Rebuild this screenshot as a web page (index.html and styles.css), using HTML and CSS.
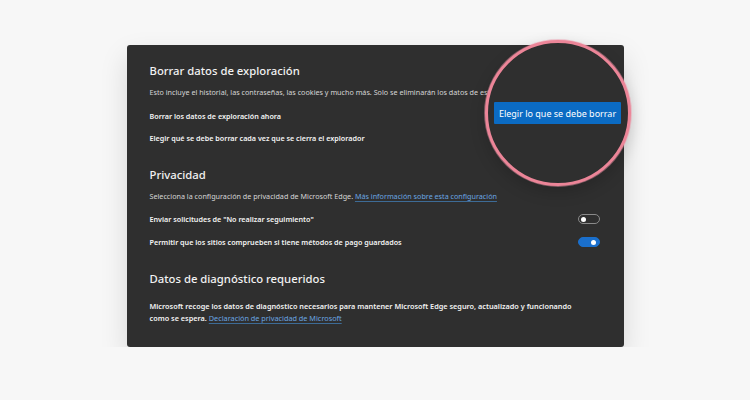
FILE: index.html
```html
<!DOCTYPE html>
<html>
  <head>
    <link rel="stylesheet" href="styles.css">
  </head>
  <body>
    <div class="card">
      <div class="section">
        <h2 class="title">Borrar datos de exploración</h2>
        <p class="desc">Esto incluye el historial, las contraseñas, las cookies y mucho más. Solo se eliminarán los datos de este perfil.</p>
        <div class="row">Borrar los datos de exploración ahora</div>
        <div class="row">Elegir qué se debe borrar cada vez que se cierra el explorador</div>
      </div>
      <div class="section">
        <h2 class="title">Privacidad</h2>
        <p class="desc">Selecciona la configuración de privacidad de Microsoft Edge. <a href="#">Más información sobre esta configuración</a></p>
        <div class="row">
          Enviar solicitudes de "No realizar seguimiento"
          <span class="toggle"></span>
        </div>
        <div class="row">
          Permitir que los sitios comprueben si tiene métodos de pago guardados
          <span class="toggle on"></span>
        </div>
      </div>
      <div class="section">
        <h2 class="title">Datos de diagnóstico requeridos</h2>
        <p class="para">Microsoft recoge los datos de diagnóstico necesarios para mantener Microsoft Edge seguro, actualizado y funcionando como se espera. <a href="#">Declaración de privacidad de Microsoft</a></p>
      </div>
      <div class="lens">
        <button class="choose">Elegir lo que se debe borrar</button>
      </div>
    </div>
  </body>
</html>
```

FILE: styles.css
```css
body {
  margin: 0;
  background: #f7f7f7;
  font-family: "Noto Sans", "Open Sans", sans-serif;
  -webkit-font-smoothing: antialiased;
}
.card {
  position: relative;
  width: 497px;
  box-sizing: border-box;
  margin: 45px auto 0;
  padding: 18px 24px 23px 23px;
  background: #2f2f2f;
  border-radius: 3px;
  color: #fff;
  box-shadow: 0 12px 28px rgba(0, 0, 0, 0.13);
}
.section + .section {
  margin-top: 18px;
}
.title {
  margin: 0;
  font-size: 11.3px;
  font-weight: 500;
  line-height: 16px;
  color: #f2f2f2;
}
.desc {
  margin: 7px 0 0;
  font-size: 7.2px;
  line-height: 12px;
  color: #d6d6d6;
  white-space: nowrap;
}
.row {
  display: flex;
  align-items: center;
  justify-content: space-between;
  height: 22px;
  font-size: 7.2px;
  font-weight: 600;
  color: #f4f4f4;
}
.desc + .row {
  margin-top: 7px;
}
.section + .section .desc + .row {
  margin-top: 6px;
}
.section + .section .row + .row {
  margin-top: 1px;
}
.para {
  margin: 13px 0 0;
  width: 432px;
  font-size: 7.3px;
  font-weight: 600;
  line-height: 12px;
  color: #f2f2f2;
}
a {
  color: #6aa6e2;
  font-weight: 400;
  text-decoration: underline;
  text-decoration-color: #3d6b96;
  text-underline-offset: 1.5px;
}
.toggle {
  position: relative;
  width: 22px;
  height: 10px;
  box-sizing: border-box;
  border: 1px solid #8a8a8a;
  border-radius: 5px;
}
.toggle::after {
  content: "";
  position: absolute;
  top: 1.5px;
  left: 2.5px;
  width: 5px;
  height: 5px;
  border-radius: 50%;
  background: #fff;
}
.toggle.on {
  border-color: #1a6fcc;
  background: #1a6fcc;
}
.toggle.on::after {
  left: auto;
  right: 3px;
}
.lens {
  position: absolute;
  left: 358px;
  top: -5px;
  width: 146px;
  height: 146px;
  box-sizing: border-box;
  display: flex;
  align-items: center;
  justify-content: center;
  border: 3px solid #ec8598;
  border-radius: 50%;
  background: #2f2f2f;
  box-shadow: 0 0 0 1px rgba(240, 150, 170, 0.45), 0 6px 16px rgba(0, 0, 0, 0.18);
}
.choose {
  width: 127px;
  height: 22px;
  padding: 0;
  border: 0;
  border-radius: 1px;
  background: #0b6bc3;
  color: #fff;
  font-family: inherit;
  font-size: 9px;
}
```
